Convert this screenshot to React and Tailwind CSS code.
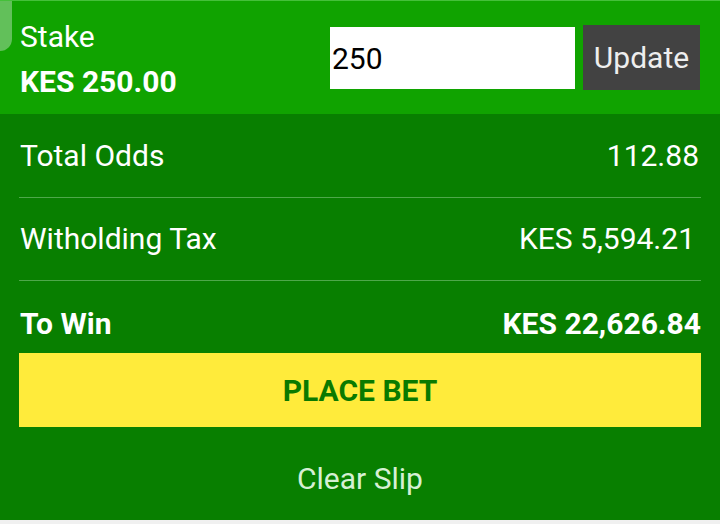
import React from "react";

const Row = ({ label, value, bold, className = "" }) => (
    <div className={`flex items-center justify-between leading-[34px] ${className}`}>
        <span className={bold ? "font-bold" : ""}>{label}</span>
        <span className={bold ? "font-bold" : ""}>{value}</span>
    </div>
);

export default function App() {
    return (
        <div className="w-[720px] h-[524px] bg-[#f0f0f0] font-['Roboto',sans-serif] text-[30px] text-white overflow-hidden">
            <div className="relative h-[114px] bg-[#10a300] border-t border-[#45c03a] flex items-center justify-between pl-[20px] pr-[20px]">
                <div className="absolute left-0 top-0 w-[12px] h-[50px] bg-[#62c05a] rounded-br-[12px]" />
                <div className="flex flex-col leading-[34px] mt-[4px]">
                    <span>Stake</span>
                    <span className="font-bold mt-[11px]">KES 250.00</span>
                </div>
                <div className="flex items-center">
                    <input
                        defaultValue="250"
                        className="w-[245px] h-[62px] bg-white text-black text-[30px] pl-[2px] outline-none mt-[1px]"
                    />
                    <button className="ml-[8px] w-[117px] h-[65px] bg-[#424242] text-[#eeeeee] text-[30px]">
                        Update
                    </button>
                </div>
            </div>
            <div className="h-[406px] bg-[#087f00] px-[19px]">
                <Row label={<span className="pl-[1px]">Total Odds</span>} value={<span className="pr-[2px]">112.88</span>} className="h-[84px] border-b border-[#4ea84a]" />
                <Row label={<span className="pl-[1px]">Witholding Tax</span>} value={<span className="pr-[6px]">KES 5,594.21</span>} className="h-[83px] border-b border-[#4ea84a]" />
                <Row label={<span className="pl-[1px]">To Win</span>} value="KES 22,626.84" bold className="pt-[26px] pb-[12px]" />
                <button className="w-full h-[74px] bg-[#ffeb3b] text-[#0a7a00] font-bold text-[30px]">
                    PLACE BET
                </button>
                <div className="pt-[35px] text-center text-[#d6f0d4] text-[30px] leading-[34px]">Clear Slip</div>
            </div>
        </div>
    );
}
